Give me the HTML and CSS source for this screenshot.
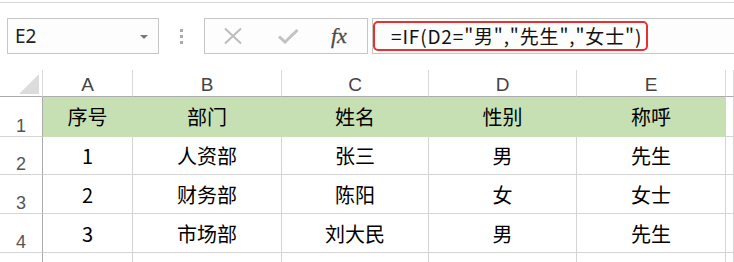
FILE: index.html
```html
<!DOCTYPE html>
<html lang="zh-CN">
<head>
<meta charset="utf-8">
<title>Excel</title>
<link rel="stylesheet" href="styles.css">
</head>
<body>
<div class="app">
  <div class="top-rule"></div>
  <div class="bar">
    <div class="namebox"><span class="ref">E2</span><span class="arrow"></span></div>
    <div class="sep"><i></i><i></i><i></i></div>
    <div class="fxbox">
      <svg class="ico" width="20" height="18" viewBox="0 0 20 18"><path d="M2 1.5 L18 16.5 M18 1.5 L2 16.5" stroke="#bdbdbd" stroke-width="2" fill="none"/></svg>
      <svg class="ico" width="22" height="16" viewBox="0 0 22 16"><path d="M2 8.5 L8 14 L20.5 2" stroke="#c2c2c2" stroke-width="3" fill="none"/></svg>
      <span class="fx">fx</span>
    </div>
    <div class="input"><span class="formula">=IF(D2="男","先生","女士")</span></div>
  </div>
  <div class="sheet">
    <div class="corner"><span class="tri"></span></div>
    <div class="ch">A</div>
    <div class="ch">B</div>
    <div class="ch">C</div>
    <div class="ch">D</div>
    <div class="ch">E</div>
    <div class="ch last"></div>

    <div class="rh">1</div>
    <div class="c g">序号</div>
    <div class="c g">部门</div>
    <div class="c g">姓名</div>
    <div class="c g">性别</div>
    <div class="c g">称呼</div>
    <div class="c"></div>

    <div class="rh">2</div>
    <div class="c">1</div>
    <div class="c">人资部</div>
    <div class="c">张三</div>
    <div class="c">男</div>
    <div class="c">先生</div>
    <div class="c"></div>

    <div class="rh">3</div>
    <div class="c">2</div>
    <div class="c">财务部</div>
    <div class="c">陈阳</div>
    <div class="c">女</div>
    <div class="c">女士</div>
    <div class="c"></div>

    <div class="rh">4</div>
    <div class="c">3</div>
    <div class="c">市场部</div>
    <div class="c">刘大民</div>
    <div class="c">男</div>
    <div class="c">先生</div>
    <div class="c"></div>

    <div class="rh"></div>
    <div class="c"></div>
    <div class="c"></div>
    <div class="c"></div>
    <div class="c"></div>
    <div class="c"></div>
    <div class="c"></div>
  </div>
</div>
</body>
</html>
```

FILE: styles.css
```css
* { box-sizing: border-box; }
html, body { margin: 0; padding: 0; background: #fff; }
.app {
  width: 734px;
  height: 262px;
  overflow: hidden;
  background: #fff;
  font-family: "Noto Sans CJK SC", "Noto Sans", sans-serif;
}
.top-rule {
  height: 3px;
  border-bottom: 1px solid #d6d6d6;
  margin-top: 0;
}
.bar {
  display: flex;
  height: 36px;
  margin-top: 15px;
}
.namebox {
  margin-left: 7px;
  width: 152px;
  border: 1px solid #c6c6c6;
  background: #fdfdfd;
  display: flex;
  align-items: center;
  justify-content: space-between;
  padding: 0 10px 0 7px;
}
.ref {
  font-family: "Noto Sans", sans-serif;
  font-size: 19px;
  color: #222;
  line-height: 1;
}
.arrow {
  width: 0;
  height: 0;
  border-left: 4px solid transparent;
  border-right: 4px solid transparent;
  border-top: 4px solid #777;
  margin-top: 1px;
}
.sep {
  width: 45px;
  display: flex;
  flex-direction: column;
  align-items: center;
  justify-content: center;
  gap: 3px;
}
.sep i {
  display: block;
  width: 3px;
  height: 3px;
  background: #aaa;
}
.fxbox {
  width: 164px;
  border: 1px solid #c6c6c6;
  background: #fdfdfd;
  display: flex;
  align-items: center;
  padding-left: 18px;
  gap: 34px;
}
.ico { display: block; }
.fx {
  font-family: "Liberation Serif", serif;
  font-style: italic;
  font-size: 22px;
  color: #4a4a4a;
  line-height: 1;
  margin-left: -2px;
  -webkit-text-stroke: 0.3px #4a4a4a;
}
.input {
  flex: 1;
  margin-left: 4px;
  margin-right: -2px;
  border: 1px solid #c6c6c6;
  background: #fdfdfd;
  padding: 2px 0 0 0;
}
.formula {
  display: inline-block;
  height: 30px;
  border: 2px solid #e8302f;
  border-radius: 5px;
  padding: 0 4px 0 16px;
  font-size: 19px;
  line-height: 26px;
  color: #111;
  letter-spacing: 0.85px;
  white-space: nowrap;
}
.sheet {
  margin-top: 16px;
  display: grid;
  grid-template-columns: 43px 90px 149px 147px 148px 149px 1fr;
  grid-template-rows: 27px 40px 38px 39px 39px 20px;
}
.sheet > div {
  border-right: 1px solid #d4d4d4;
  border-bottom: 1px solid #d4d4d4;
}
.corner {
  display: flex;
  justify-content: flex-end;
  align-items: flex-end;
  padding: 0 3px 2px 0;
  border-right-color: #dadada !important;
  border-bottom-color: #ababab !important;
}
.tri {
  display: block;
  width: 20px;
  height: 20px;
  background: #dcdcdc;
  clip-path: polygon(100% 0, 100% 100%, 0 100%);
}
.ch {
  border-right-color: #dadada !important;
  border-bottom-color: #ababab !important;
  display: flex;
  justify-content: center;
  align-items: flex-start;
  padding-top: 4px;
  font-family: "Liberation Sans", sans-serif;
  font-size: 19px;
  color: #444;
  line-height: 22px;
}
.rh {
  border-right-color: #ababab !important;
  display: flex;
  justify-content: center;
  align-items: flex-end;
  font-family: "Liberation Sans", sans-serif;
  font-size: 18px;
  line-height: 20px;
  color: #555;
  padding-bottom: 0;
}
.c {
  display: flex;
  justify-content: center;
  align-items: center;
  font-size: 20px;
  color: #000;
  line-height: 28px;
  padding-top: 1px;
}
.g {
  background: #c6e0b4;
  border-right-color: #c6e0b4 !important;
  border-bottom-color: #c6e0b4 !important;
}
```
